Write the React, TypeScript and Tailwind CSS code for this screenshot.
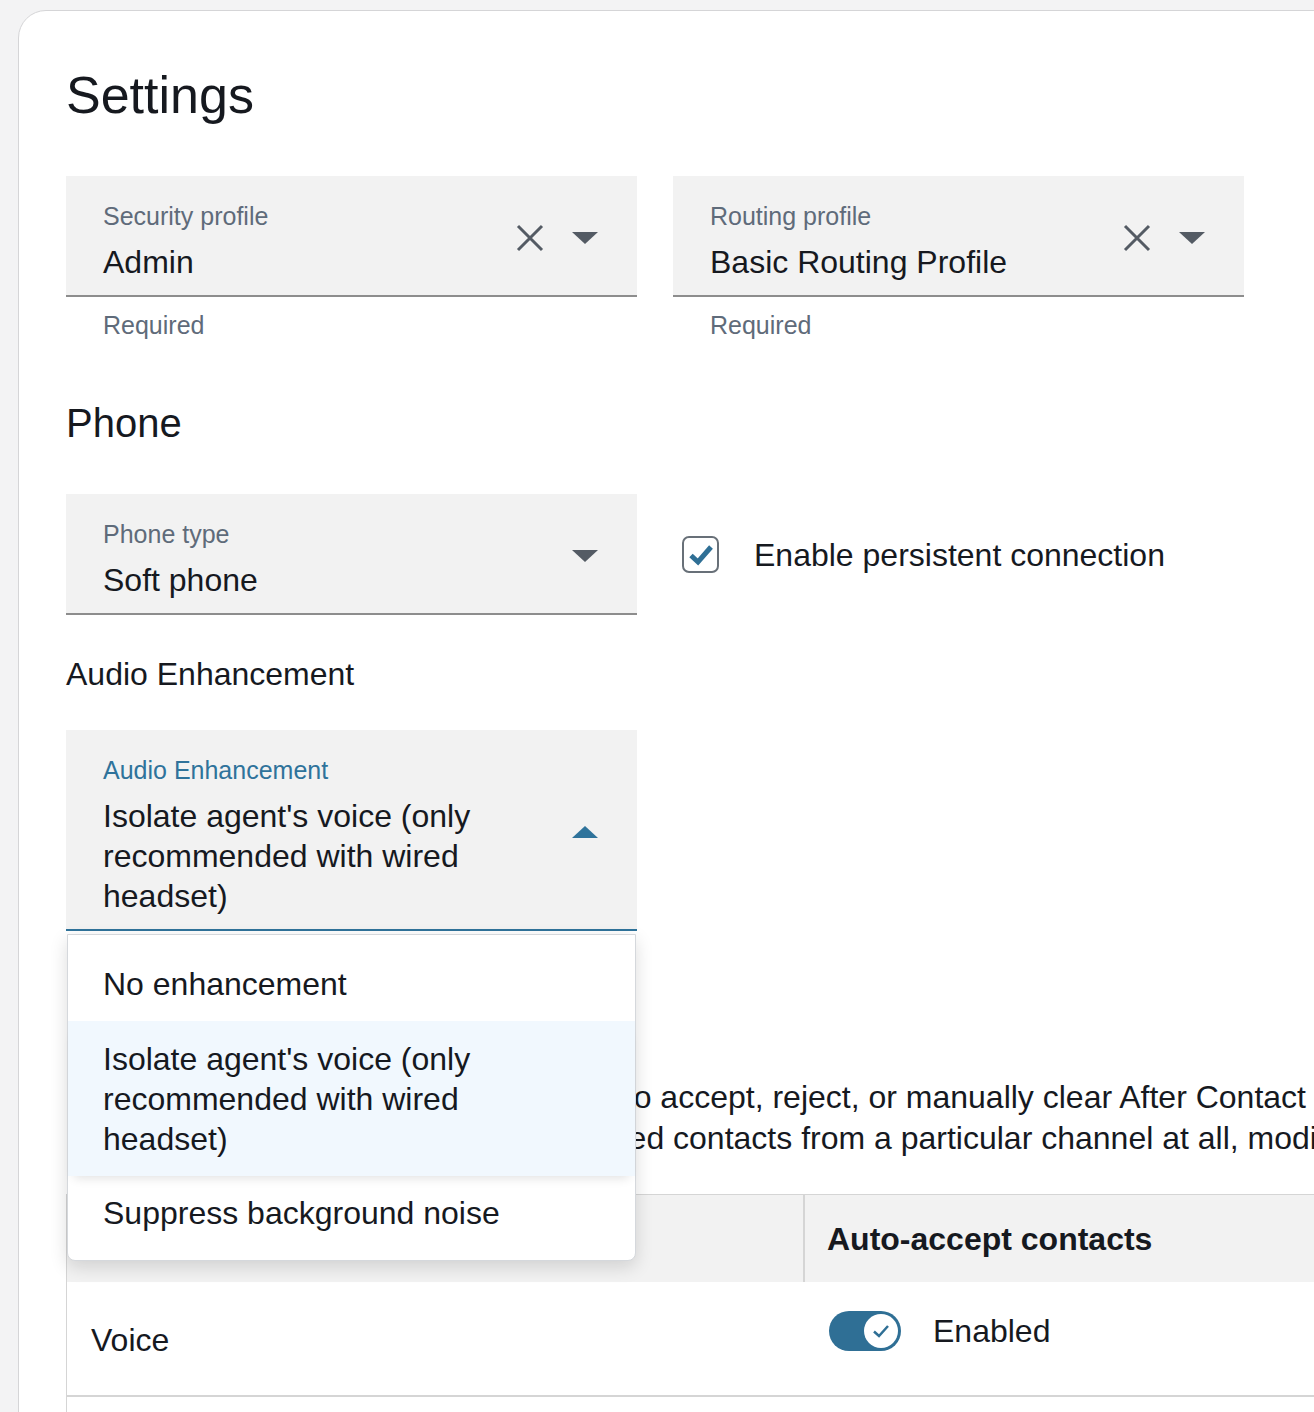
import type { ReactNode } from 'react';

function ClearIcon() {
  return (
    <svg width="28" height="28" viewBox="0 0 28 28" fill="none" aria-hidden>
      <path d="M2 2 26 26M26 2 2 26" stroke="#545b64" strokeWidth="3" />
    </svg>
  );
}

function Caret({ up = false, color = '#545b64' }: { up?: boolean; color?: string }) {
  return (
    <svg width="26" height="12" viewBox="0 0 26 12" aria-hidden>
      {up ? <polygon points="0,12 26,12 13,0" fill={color} /> : <polygon points="0,0 26,0 13,12" fill={color} />}
    </svg>
  );
}

function SelectField({
  label,
  children,
  clearable = false,
  open = false,
}: {
  label: string;
  children: ReactNode;
  clearable?: boolean;
  open?: boolean;
}) {
  return (
    <div
      className={`flex w-[571px] items-center border-b-2 bg-[#f2f2f2] pb-[13px] pl-[37px] pr-[39px] pt-[24px] ${
        open ? 'border-[#2f739b]' : 'border-[#8d8d8d]'
      }`}
    >
      <div className="flex min-w-0 flex-1 flex-col gap-[10px]">
        <div className={`text-[25px] leading-[32px] ${open ? 'text-[#2f739b]' : 'text-[#5f6b7a]'}`}>{label}</div>
        <div className="max-w-[400px] text-[32px] leading-[40px] text-[#16191f]">{children}</div>
      </div>
      <div className="flex items-center gap-[28px] pb-[6px]">
        {clearable && <ClearIcon />}
        <Caret up={open} color={open ? '#2f739b' : '#545b64'} />
      </div>
    </div>
  );
}

const AUDIO_OPTIONS = [
  'No enhancement',
  "Isolate agent's voice (only recommended with wired headset)",
  'Suppress background noise',
];

export default function App() {
  return (
    <div className="h-[1412px] w-full overflow-hidden bg-[#f3f3f4] pl-[18px] pt-[10px] font-['Liberation_Sans',Arial,sans-serif] text-[#16191f]">
      <div className="min-h-[1500px] w-[1400px] rounded-tl-[28px] border border-[#d5d5d7] bg-white pl-[47px] pt-[54px]">
        <h1 className="text-[52px] leading-[60px]">Settings</h1>

        <div className="mt-[51px] flex gap-[36px]">
          <div>
            <SelectField label="Security profile" clearable>
              Admin
            </SelectField>
            <p className="mt-[12px] pl-[37px] text-[25px] leading-[32px] text-[#5f6b7a]">Required</p>
          </div>
          <div>
            <SelectField label="Routing profile" clearable>
              Basic Routing Profile
            </SelectField>
            <p className="mt-[12px] pl-[37px] text-[25px] leading-[32px] text-[#5f6b7a]">Required</p>
          </div>
        </div>

        <h2 className="mt-[58px] text-[40px] leading-[48px]">Phone</h2>

        <div className="mt-[47px] flex items-center gap-[45px]">
          <SelectField label="Phone type">Soft phone</SelectField>
          <label className="flex items-center gap-[35px]">
            <span className="flex h-[37px] w-[37px] items-center justify-center rounded-[7px] border-2 border-[#687078] bg-white">
              <svg width="26" height="22" viewBox="0 0 26 22" fill="none" aria-hidden>
                <path d="M3 11.5 10 18 23 3" stroke="#2f6f95" strokeWidth="5" />
              </svg>
            </span>
            <span className="text-[32px] leading-[40px]">Enable persistent connection</span>
          </label>
        </div>

        <h3 className="mt-[39px] text-[32px] leading-[40px]">Audio Enhancement</h3>

        <div className="relative z-10 mt-[36px] w-[571px]">
          <SelectField label="Audio Enhancement" open>
            Isolate agent's voice (only recommended with wired headset)
          </SelectField>
          <ul className="absolute left-[1px] right-[1px] top-full mt-[3px] rounded-b-[8px] border border-[#d5d8dc] bg-white pb-[10px] pt-[12px] shadow-[0_6px_18px_rgba(0,0,0,0.14)]">
            {AUDIO_OPTIONS.map((option, i) => (
              <li
                key={option}
                className={`pl-[35px] pr-[60px] text-[32px] leading-[40px] ${
                  i === 1
                    ? 'bg-[#f1f8fe] py-[18px] pb-[17px] shadow-[0_8px_10px_-6px_rgba(0,0,0,0.12)]'
                    : 'py-[17px]'
                }`}
              >
                {option}
              </li>
            ))}
          </ul>
        </div>

        <div className="mt-[146px] pl-[2px] text-[32px] leading-[41px]">
          <p className="whitespace-nowrap">
            Configure whether agents are required to accept, reject, or manually clear After Contact Work (ACW)
          </p>
          <p className="whitespace-nowrap">
            per channel. If agents shouldn't be offered contacts from a particular channel at all, modify their
            routing profile.
          </p>
        </div>

        <div className="mt-[35px] w-[1400px] border-l border-t border-[#d5d5d5]">
          <div className="flex h-[87px] bg-[#f2f2f2]">
            <div className="w-[738px] border-r-2 border-[#d5d5d5]" />
            <div className="flex items-center pl-[22px] text-[32px] font-bold leading-[40px]">Auto-accept contacts</div>
          </div>
          <div className="flex h-[115px] border-b-2 border-[#d5d5d5]">
            <div className="flex w-[740px] items-center pl-[24px] pt-[2px] text-[32px] leading-[40px]">Voice</div>
            <div className="flex items-start gap-[32px] pl-[22px] pt-[29px]">
              <span className="flex h-[40px] w-[72px] items-center justify-end rounded-full bg-[#2f6f95] pr-[3px]">
                <span className="flex h-[34px] w-[34px] items-center justify-center rounded-full bg-white">
                  <svg width="20" height="16" viewBox="0 0 20 16" fill="none" aria-hidden>
                    <path d="M3 8.5 8 13 17 3" stroke="#2f6f95" strokeWidth="2.5" />
                  </svg>
                </span>
              </span>
              <span className="text-[32px] leading-[40px]">Enabled</span>
            </div>
          </div>
          <div className="h-[60px]" />
        </div>
      </div>
    </div>
  );
}
